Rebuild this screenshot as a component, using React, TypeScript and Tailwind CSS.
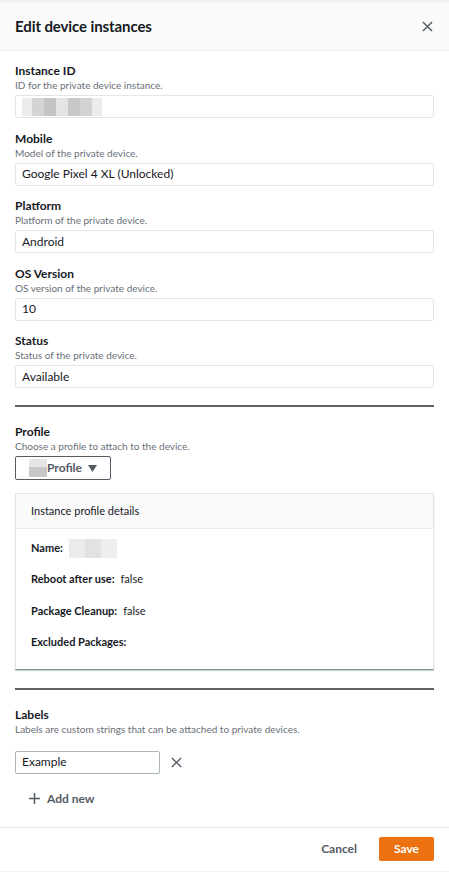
import React from "react";

const font = { fontFamily: "Lato, 'Open Sans', Arial, sans-serif" };

function Field({
  label,
  hint,
  value,
  blurred,
}: {
  label: string;
  hint: string;
  value?: string;
  blurred?: boolean;
}) {
  return (
    <div className="mt-[12.5px] first:mt-0">
      <div className="text-[12px] leading-[15px] font-bold text-[#16191f]">{label}</div>
      <div className="text-[10px] leading-[14px] text-[#687078]">{hint}</div>
      <div className="mt-[3px] h-[23px] border border-[#e3e6e6] rounded-[2px] flex items-center px-[6px] text-[12px] text-[#16191f]">
        {blurred ? (
          <div className="flex h-[18px]">
            <div className="w-[10px] bg-[#ececec]" />
            <div className="w-[12px] bg-[#d4d4d4]" />
            <div className="w-[12px] bg-[#c4c4c4]" />
            <div className="w-[12px] bg-[#e4e4e4]" />
            <div className="w-[12px] bg-[#c8c8c8]" />
            <div className="w-[12px] bg-[#d2d2d2]" />
            <div className="w-[10px] bg-[#ebebeb]" />
          </div>
        ) : (
          value
        )}
      </div>
    </div>
  );
}

function DetailRow({ label, value, blurred }: { label: string; value?: string; blurred?: boolean }) {
  return (
    <div className="h-[20px] flex items-center gap-[6px] text-[11px]">
      <span className="font-bold text-[#16191f]">{label}</span>
      {blurred ? (
        <div className="flex h-[19px]">
          <div className="w-[16px] bg-[#ebebeb]" />
          <div className="w-[16px] bg-[#e2e2e2]" />
          <div className="w-[16px] bg-[#eeeeee]" />
        </div>
      ) : (
        <span className="text-[#16191f]">{value}</span>
      )}
    </div>
  );
}

function XIcon({ size, stroke }: { size: number; stroke: string }) {
  return (
    <svg width={size} height={size} viewBox="0 0 12 12" fill="none">
      <path d="M1 1L11 11M11 1L1 11" stroke={stroke} strokeWidth="1.5" />
    </svg>
  );
}

export default function App() {
  return (
    <div className="w-[449px] h-[872px] bg-white flex flex-col overflow-hidden" style={font}>
      <div className="h-[3px] bg-[#f0f1f1]" />
      <div className="h-[48px] bg-[#fafafa] border-b border-[#eaeded] flex items-center justify-between pl-[15px] pr-[16px]">
        <h1 className="text-[15px] font-bold text-[#16191f] tracking-[-0.1px]">Edit device instances</h1>
        <XIcon size={11} stroke="#545b64" />
      </div>

      <div className="px-[15px] pt-[12px]">
        <Field label="Instance ID" hint="ID for the private device instance." blurred />
        <Field label="Mobile" hint="Model of the private device." value="Google Pixel 4 XL (Unlocked)" />
        <Field label="Platform" hint="Platform of the private device." value="Android" />
        <Field label="OS Version" hint="OS version of the private device." value="10" />
        <Field label="Status" hint="Status of the private device." value="Available" />

        <div className="mt-[17px] h-[2px] bg-[#5f6368]" />

        <div className="mt-[18px] text-[12px] leading-[14px] font-bold text-[#16191f]">Profile</div>
        <div className="text-[10px] leading-[14px] text-[#687078]">Choose a profile to attach to the device.</div>
        <button className="mt-[3px] h-[24px] w-[96px] border border-[#545b64] rounded-[2px] flex items-center justify-center gap-[6px] text-[12px] font-bold text-[#545b64]">
          <span className="flex items-center">
            <span className="flex flex-col w-[18px] h-[18px]">
              <span className="h-[8px] bg-[#e6e6e6]" />
              <span className="h-[10px] bg-[#c8c8c8]" />
            </span>
            <span className="text-[#545b64]">Profile</span>
          </span>
          <svg width="9" height="7" viewBox="0 0 9 7">
            <path d="M0 0H9L4.5 7Z" fill="#545b64" />
          </svg>
        </button>

        <div className="mt-[13px] border border-[#e3e6e6] border-b-[#879596] shadow-[0_1px_1px_rgba(0,28,36,0.2)]">
          <div className="h-[35px] bg-[#fafafa] border-b border-[#eaeded] flex items-center px-[15px] text-[11px] text-[#16191f]">
            Instance profile details
          </div>
          <div className="px-[15px] pt-[9px] pb-[16px] flex flex-col gap-[11.5px]">
            <DetailRow label="Name:" blurred />
            <DetailRow label="Reboot after use:" value="false" />
            <DetailRow label="Package Cleanup:" value="false" />
            <DetailRow label="Excluded Packages:" value="" />
          </div>
        </div>

        <div className="mt-[18px] h-[2px] bg-[#5f6368]" />

        <div className="mt-[18px] text-[12px] leading-[14px] font-bold text-[#16191f]">Labels</div>
        <div className="text-[10px] leading-[14px] text-[#687078]">
          Labels are custom strings that can be attached to private devices.
        </div>
        <div className="mt-[15px] flex items-center gap-[11px]">
          <div className="w-[145px] h-[23px] border border-[#aab7b8] rounded-[2px] flex items-center px-[6px] text-[12px] text-[#16191f]">
            Example
          </div>
          <XIcon size={11} stroke="#545b64" />
        </div>
        <div className="mt-[15px] h-[20px] flex items-center gap-[7px] pl-[14px] text-[12px] font-bold text-[#545b64]">
          <svg width="11" height="11" viewBox="0 0 11 11">
            <path d="M5.5 0V11M0 5.5H11" stroke="#545b64" strokeWidth="1.5" />
          </svg>
          Add new
        </div>
      </div>

      <div className="mt-[18px] border-t border-[#eaeded] h-[44px] flex items-center justify-end gap-[22px] px-[15px]">
        <span className="text-[12px] font-bold text-[#545b64]">Cancel</span>
        <button className="h-[24px] w-[55px] bg-[#ec7211] rounded-[2px] text-[12px] font-bold text-white">
          Save
        </button>
      </div>
      <div className="flex-1 bg-[#f0f1f1]" />
    </div>
  );
}
